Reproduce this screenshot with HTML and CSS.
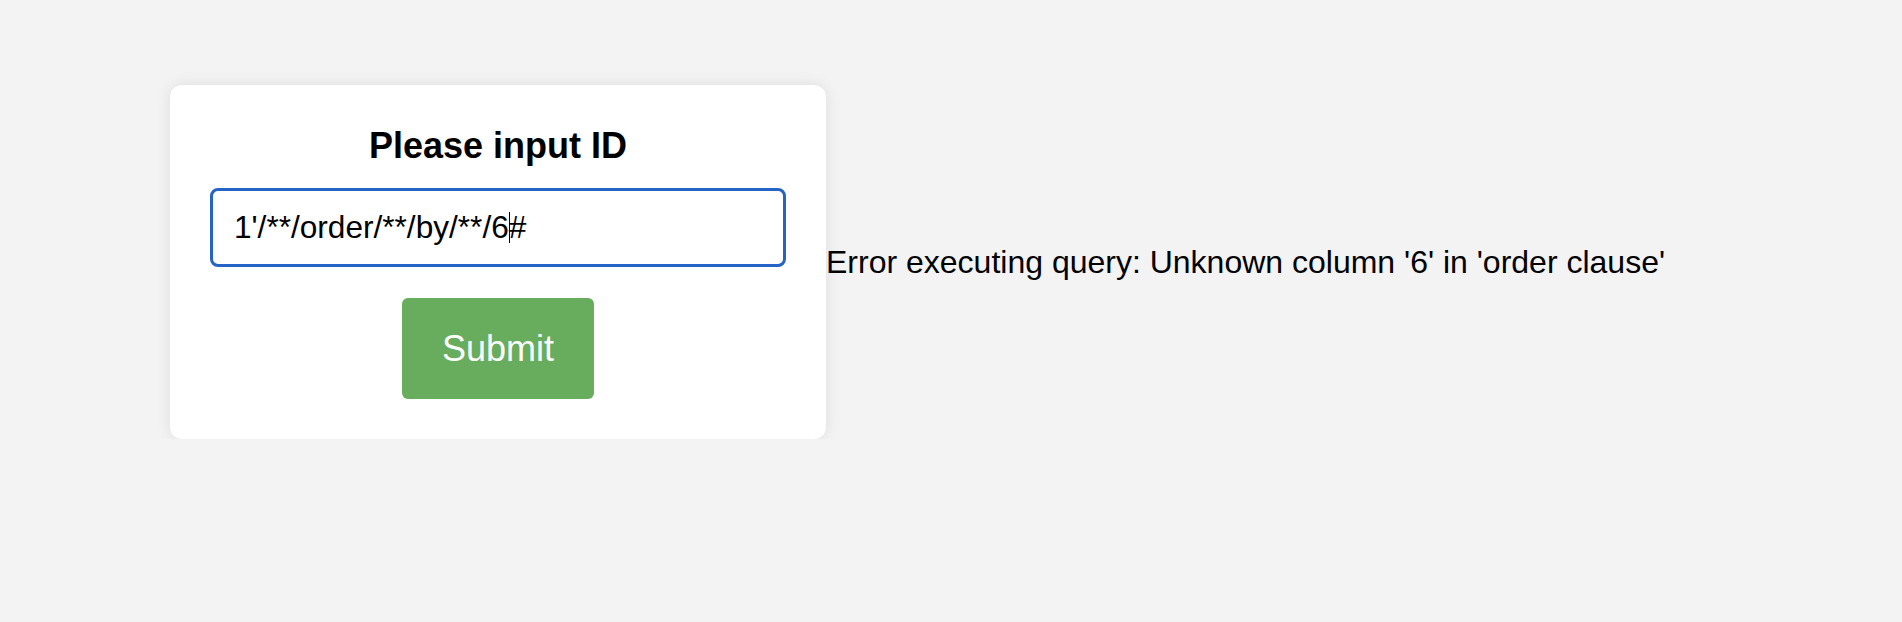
FILE: index.html
```html
<!DOCTYPE html>
<html lang="en">
<head>
<meta charset="utf-8">
<title>Please input ID</title>
<link rel="stylesheet" href="styles.css">
</head>
<body>
<main class="page">
  <form class="card">
    <h2 class="title">Please input ID</h2>
    <div class="field"><span class="value">1'/**/order/**/by/**/6</span><span class="caret"></span><span class="value">#</span></div>
    <button type="button" class="submit">Submit</button>
  </form>
  <div class="result">Error executing query: Unknown column '6' in 'order clause'</div>
</main>
</body>
</html>
```

FILE: styles.css
```css
html, body {
  margin: 0;
  padding: 0;
  background: #f3f3f3;
  font-family: "Liberation Sans", Arial, Helvetica, sans-serif;
  color: #000;
}

.page {
  display: flex;
  align-items: center;
  padding: 85px 0 0 170px;
}

.card {
  box-sizing: border-box;
  width: 656px;
  height: 354px;
  padding: 41px 40px 40px;
  background: #ffffff;
  border-radius: 12px;
  box-shadow: 0 0 16px rgba(0, 0, 0, 0.09);
  display: flex;
  flex-direction: column;
  align-items: center;
}

.title {
  margin: 0;
  font-size: 36px;
  line-height: 40px;
  font-weight: bold;
  text-align: center;
}

.field {
  box-sizing: border-box;
  width: 100%;
  height: 79px;
  margin-top: 22px;
  padding: 0 18px 0 21px;
  border: 3px solid #2563c6;
  border-radius: 8px;
  display: flex;
  align-items: center;
  font-size: 31.6px;
  white-space: pre;
}

.caret {
  display: inline-block;
  width: 1px;
  height: 31px;
  margin-right: -1px;
  background: #000;
}

.submit {
  box-sizing: border-box;
  width: 192px;
  height: 101px;
  margin-top: 31px;
  padding: 0;
  border: none;
  border-radius: 6px;
  background: #67ad5d;
  color: #ffffff;
  font-family: "Liberation Sans", Arial, Helvetica, sans-serif;
  font-size: 36px;
  line-height: 40px;
}

.result {
  font-size: 32px;
  white-space: nowrap;
}
```
